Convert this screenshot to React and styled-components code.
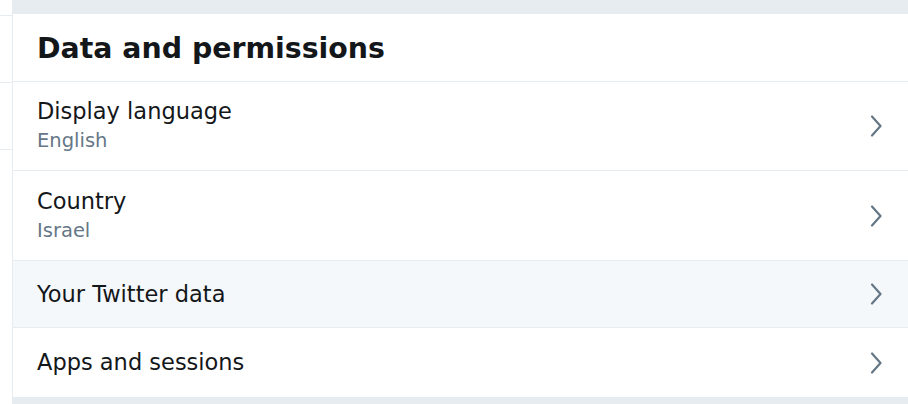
import React from 'react';
import styled, { createGlobalStyle } from 'styled-components';

const GlobalStyle = createGlobalStyle`
  html, body {
    margin: 0;
    padding: 0;
    background: #fff;
    font-family: "DejaVu Sans", "Noto Sans", sans-serif;
  }
`;

const Page = styled.div`
  display: flex;
  width: 908px;
  height: 404px;
  overflow: hidden;
`;

const SideColumn = styled.div`
  width: 12px;
  flex-shrink: 0;
  border-right: 1px solid #e6ecf0;
  background: #fff;
`;

const SideItem = styled.div`
  height: ${props => props.h}px;
  border-bottom: 1px solid #e6ecf0;
`;

const Main = styled.div`
  flex: 1;
  background: #e6ecf0;
  padding: 14px 0 7px;
`;

const Panel = styled.div`
  background: #fff;
`;

const Header = styled.h2`
  margin: 0;
  height: 68px;
  display: flex;
  align-items: center;
  padding: 2px 24px 0;
  box-sizing: border-box;
  font-size: 28.4px;
  font-weight: bold;
  color: #14171a;
  border-bottom: 1px solid #e6ecf0;
`;

const Row = styled.div`
  display: flex;
  align-items: center;
  justify-content: space-between;
  height: ${props => props.h}px;
  padding: 0 26px 0 24px;
  background: ${props => (props.active ? '#f5f8fa' : '#fff')};
  border-bottom: ${props => (props.last ? 'none' : '1px solid #e6ecf0')};
  cursor: pointer;
`;

const Labels = styled.div`
  display: flex;
  flex-direction: column;
`;

const Title = styled.span`
  font-size: 22.5px;
  color: #14171a;
  line-height: 29px;
`;

const Subtitle = styled.span`
  font-size: 19.5px;
  color: #657786;
  line-height: 29px;
`;

const Chevron = () => (
  <svg width="12" height="22" viewBox="0 0 12 22" fill="none">
    <path
      d="M2 1.5 L10.5 11 L2 20.5"
      stroke="#657786"
      strokeWidth="2.2"
      strokeLinecap="round"
      strokeLinejoin="round"
    />
  </svg>
);

const items = [
  { title: 'Display language', sub: 'English', h: 88 },
  { title: 'Country', sub: 'Israel', h: 89 },
  { title: 'Your Twitter data', h: 66, active: true },
  { title: 'Apps and sessions', h: 69, last: true }
];

export default function App() {
  return (
    <Page>
      <GlobalStyle />
      <SideColumn>
        <SideItem h={15} />
        <SideItem h={66} />
        <SideItem h={66} />
      </SideColumn>
      <Main>
        <Panel>
          <Header>Data and permissions</Header>
          {items.map(item => (
            <Row key={item.title} h={item.h} active={item.active} last={item.last}>
              <Labels>
                <Title>{item.title}</Title>
                {item.sub && <Subtitle>{item.sub}</Subtitle>}
              </Labels>
              <Chevron />
            </Row>
          ))}
        </Panel>
      </Main>
    </Page>
  );
}
